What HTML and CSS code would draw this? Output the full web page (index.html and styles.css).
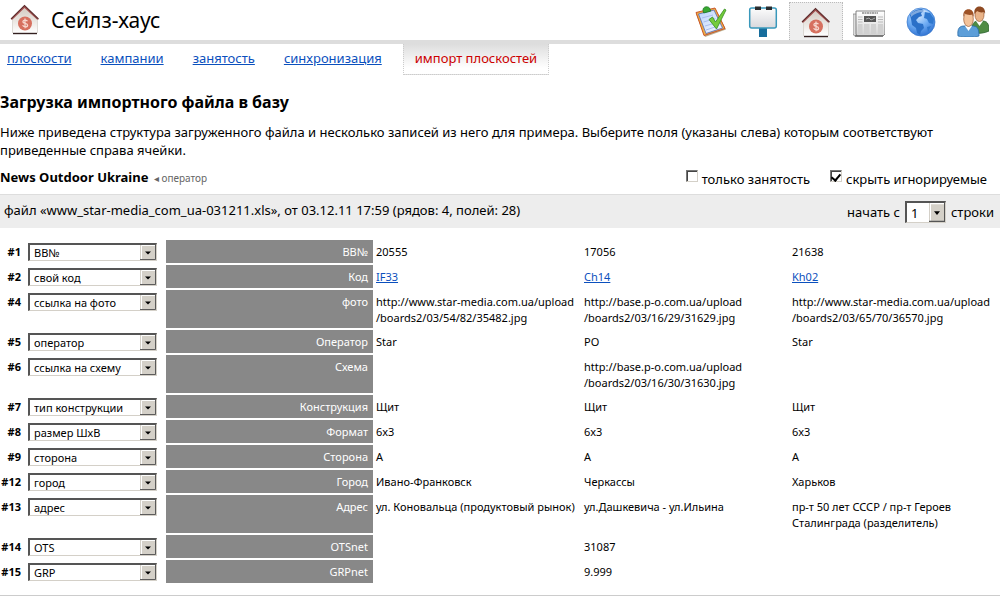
FILE: index.html
```html
<!DOCTYPE html>
<html lang="ru">
<head>
<meta charset="utf-8">
<title>Сейлз-хаус</title>
<link rel="stylesheet" href="styles.css">
</head>
<body>
<svg class="defs" aria-hidden="true">
  <defs>
    <linearGradient id="wall" x1="0" y1="0" x2="0" y2="1"><stop offset="0" stop-color="#d4cbc1"/><stop offset="1" stop-color="#fff"/></linearGradient>
    <linearGradient id="board" x1="0" y1="0" x2="0" y2="1"><stop offset="0" stop-color="#fcfcfc"/><stop offset="1" stop-color="#d8d8dc"/></linearGradient>
    <linearGradient id="sheet" x1="0" y1="0" x2="1" y2="1"><stop offset="0" stop-color="#b9d3fb"/><stop offset="1" stop-color="#f6f8ff"/></linearGradient>
    <linearGradient id="paper" x1="0" y1="0" x2="0" y2="1"><stop offset="0" stop-color="#fff"/><stop offset="1" stop-color="#d2d2d2"/></linearGradient>
    <radialGradient id="sea" cx=".4" cy=".25" r=".8"><stop offset="0" stop-color="#d8eaff"/><stop offset=".5" stop-color="#71aef4"/><stop offset="1" stop-color="#2c6fd0"/></radialGradient>
    <symbol id="house" viewBox="0 0 32 32">
      <path d="M4 15 15.500 4 28 15v14H4z" fill="url(#wall)"/>
      <path d="M4 29.500h24" stroke="#33201f" stroke-width="1.400"/>
      <path d="M3.500 29V15M28.500 29V15" stroke="#d5d0ca" stroke-width=".8"/>
      <path d="M2 15.500 15.500 2 29.500 15.500 28 15.500 15.500 4 3.500 15.500z" fill="#a34a48"/>
      <path d="M2 15 15.500 1.500 29.500 15" fill="none" stroke="#5c2b2b" stroke-width="1.100"/>
      <circle cx="16" cy="19.500" r="7" fill="#d6705f"/>
      <path d="M18.400 17.300c-.6-1.800-4.500-1.700-4.500.4 0 2.300 4.700 1 4.700 3.500 0 2.200-4.300 2.200-4.900 0M16 14.600v9.700" fill="none" stroke="#f7d8cf" stroke-width="1.300"/>
    </symbol>
  </defs>
</svg>

<header class="top">
  <div class="brand">
    <svg class="icon" aria-hidden="true"><use href="#house"/></svg>
    <h1 class="brand-name">Сейлз-хаус</h1>
  </div>
  <nav class="apps" aria-label="Разделы">
    <a class="app" href="#tasks" aria-label="Задачи">
      <svg class="icon" viewBox="0 0 32 32">
        <path d="M1 9 21 4.500l10 20L10 32z" fill="#7c5a18" opacity=".5"/>
        <path d="M1 7.500 20 3l10 20.500L9 30.500z" fill="#f0ae42" stroke="#c9572a" stroke-width="1"/>
        <path d="M3.500 9 19 5l8.500 18L11 28.500z" fill="url(#sheet)" stroke="#4f68bd" stroke-width=".8"/>
        <path d="m7 13 11-3M8.500 17l12-3.500M10 21l12-3.500M11 25l12-4" stroke="#a9bcec" stroke-width="1"/>
        <path d="M8 5.500C7.500 1 14 .5 15 4l.7 2.200-7 1.800z" fill="#38a832" stroke="#17731b" stroke-width=".7"/>
        <path d="m14 14.500 3.500-2.500 3 5L29.500 4l1.500 1-9.500 19z" fill="#75cb3c" stroke="#348c21" stroke-width=".8"/>
      </svg>
    </a>
    <a class="app" href="#boards" aria-label="Щиты">
      <svg class="icon" viewBox="0 0 32 32">
        <path d="M12 21h8v12h-8z" fill="#176d9c"/>
        <rect x="2.700" y="3" width="26.600" height="20" rx="2" fill="url(#board)" stroke="#3998bb" stroke-width="1.500"/>
        <path d="M8 1.500h6V5H8zM19 1.500h6V5h-6z" fill="#292b2d"/>
      </svg>
    </a>
    <a class="app app-active" href="#sales" aria-label="Сейлз-хаус" aria-current="page">
      <svg class="icon" aria-hidden="true"><use href="#house"/></svg>
    </a>
    <a class="app" href="#news" aria-label="Новости">
      <svg class="icon" viewBox="0 0 32 32">
        <path d="M0 9h4v22H1.500L0 29z" fill="#ddd" stroke="#888" stroke-width=".8"/>
        <path d="M3 6h29v23l-2 2H4l-1-2z" fill="url(#paper)" stroke="#777" stroke-width=".9"/>
        <path d="M2 31h28" stroke="#555" stroke-width="1.200"/>
        <path d="M9 8h16" stroke="#555" stroke-width="1.200" stroke-dasharray="2 .5"/>
        <path d="M11 11h12v6H11z" fill="#555"/>
        <path d="m13 14 3-1 2 2 4-2" fill="none" stroke="#aaa"/>
        <path d="M5 12h4.500M5 14.500h4.500M5 17h4.500M25 12h5M25 14.500h5M25 17h5" stroke="#b9b9b9" stroke-width="1.200"/>
        <path d="M5 19h4.500v10H5zM11 19h5.500v10H11zM18 19h5v10h-5zM25 19h5v10h-5z" fill="#d0d0d0"/>
      </svg>
    </a>
    <a class="app" href="#map" aria-label="Карта">
      <svg class="icon" viewBox="0 0 32 32">
        <circle cx="16" cy="17" r="14" fill="url(#sea)" stroke="#3a79cc" stroke-width=".7"/>
        <path d="M5 10C8 5.500 13 3.500 17 4l2 2-3 2 1 3-3 1-3 3 2 3 5 1 1 4-3 3-1 4-3-2-1-5-4-3-1-6z" fill="#2b70c8"/>
        <path d="m20 7 5 1 4 6-1 5-4-1-2-4-3-1zM22 22l4-1-3 6z" fill="#2f78cf"/>
        <path d="M6 9c5-5 14-6 19-1-7-2-14-1-19 4z" fill="#fff" opacity=".4"/>
      </svg>
    </a>
    <a class="app" href="#users" aria-label="Пользователи">
      <svg class="icon" viewBox="0 0 32 32">
        <path d="M15 28c-1-9 2-12 6-12h4c5 0 7 2 7 10-4 2-10 3-17 2z" fill="#4f8b44" stroke="#2c6230" stroke-width=".8"/>
        <path d="m19 16 3.500 5 3.500-5z" fill="#fff"/>
        <ellipse cx="22.500" cy="10" rx="4.500" ry="6.500" fill="#e9b388" stroke="#9e5a30" stroke-width=".7"/>
        <path d="M17.500 9c-2-10 12-10 10.500 0l-1-2c-3 1-5 0-7-1z" fill="#8f4a22"/>
        <path d="M1 31c-1-8 2-10 6-10h8c5 0 7 2 7 10-5 1.500-15 1.500-21 0z" fill="#5c9ed9" stroke="#286ba7" stroke-width=".8"/>
        <path d="m8 21 3.500 5 3.500-5z" fill="#fff"/>
        <ellipse cx="11.500" cy="14" rx="4.800" ry="7.500" fill="#f3c39b" stroke="#9e5a30" stroke-width=".7"/>
        <path d="M6.500 12C4.500 1.500 18.500 1.500 16.500 12l-1-2.500c-3 1-6 0-8-1z" fill="#9d5226"/>
      </svg>
    </a>
  </nav>
</header>

<nav class="tabs" aria-label="Подразделы">
  <a class="tab" href="#planes">плоскости</a>
  <a class="tab" href="#campaigns">кампании</a>
  <a class="tab" href="#busy">занятость</a>
  <a class="tab" href="#sync">синхронизация</a>
  <a class="tab tab-active" href="#import" aria-current="page">импорт плоскостей</a>
</nav>

<main class="content">
  <h2 class="title">Загрузка импортного файла в базу</h2>
  <p class="intro">Ниже приведена структура загруженного файла и несколько записей из него для примера. Выберите поля (указаны слева) которым соответствуют приведенные справа ячейки.</p>

  <div class="operator-row">
    <div class="operator"><strong>News Outdoor Ukraine</strong> <span class="hint">◂ оператор</span></div>
    <div class="flags">
      <label class="flag"><input class="check" type="checkbox">только занятость</label>
      <label class="flag"><input class="check" type="checkbox" checked>скрыть игнорируемые</label>
    </div>
  </div>

  <div class="file-bar">
    <span>файл «www_star-media_com_ua-031211.xls», от 03.12.11 17:59 (рядов: 4, полей: 28)</span>
    <span class="start"><label for="start">начать с</label><select class="pick pick-row" id="start"><option>1</option></select>строки</span>
  </div>

  <table class="map">
    <colgroup><col class="col-num"><col class="col-pick"><col><col><col><col></colgroup>
    <tbody>
      <tr><th><label for="f1">#1</label></th><td><select class="pick" id="f1"><option>BB№</option></select></td><td class="name">BB№</td><td>20555</td><td>17056</td><td>21638</td></tr>
      <tr><th><label for="f2">#2</label></th><td><select class="pick" id="f2"><option>свой код</option></select></td><td class="name">Код</td><td><a href="#IF33">IF33</a></td><td><a href="#Ch14">Ch14</a></td><td><a href="#Kh02">Kh02</a></td></tr>
      <tr><th><label for="f4">#4</label></th><td><select class="pick" id="f4"><option>ссылка на фото</option></select></td><td class="name">фото</td><td>http://www.star-media.com.ua/upload<br>/boards2/03/54/82/35482.jpg</td><td>http://base.p-o.com.ua/upload<br>/boards2/03/16/29/31629.jpg</td><td>http://www.star-media.com.ua/upload<br>/boards2/03/65/70/36570.jpg</td></tr>
      <tr><th><label for="f5">#5</label></th><td><select class="pick" id="f5"><option>оператор</option></select></td><td class="name">Оператор</td><td>Star</td><td>PO</td><td>Star</td></tr>
      <tr><th><label for="f6">#6</label></th><td><select class="pick" id="f6"><option>ссылка на схему</option></select></td><td class="name">Схема</td><td></td><td>http://base.p-o.com.ua/upload<br>/boards2/03/16/30/31630.jpg</td><td></td></tr>
      <tr><th><label for="f7">#7</label></th><td><select class="pick" id="f7"><option>тип конструкции</option></select></td><td class="name">Конструкция</td><td>Щит</td><td>Щит</td><td>Щит</td></tr>
      <tr><th><label for="f8">#8</label></th><td><select class="pick" id="f8"><option>размер ШхВ</option></select></td><td class="name">Формат</td><td>6x3</td><td>6x3</td><td>6x3</td></tr>
      <tr><th><label for="f9">#9</label></th><td><select class="pick" id="f9"><option>сторона</option></select></td><td class="name">Сторона</td><td>А</td><td>А</td><td>А</td></tr>
      <tr><th><label for="f12">#12</label></th><td><select class="pick" id="f12"><option>город</option></select></td><td class="name">Город</td><td>Ивано-Франковск</td><td>Черкассы</td><td>Харьков</td></tr>
      <tr><th><label for="f13">#13</label></th><td><select class="pick" id="f13"><option>адрес</option></select></td><td class="name">Адрес</td><td>ул. Коновальца (продуктовый рынок)</td><td>ул.Дашкевича - ул.Ильина</td><td>пр-т 50 лет СССР / пр-т Героев<br>Сталинграда (разделитель)</td></tr>
      <tr><th><label for="f14">#14</label></th><td><select class="pick" id="f14"><option>OTS</option></select></td><td class="name">OTSnet</td><td></td><td>31087</td><td></td></tr>
      <tr><th><label for="f15">#15</label></th><td><select class="pick" id="f15"><option>GRP</option></select></td><td class="name">GRPnet</td><td></td><td>9.999</td><td></td></tr>
    </tbody>
  </table>
</main>
</body>
</html>
```
FILE: styles.css
```css
* { box-sizing: border-box; }
body { margin: 0; background: #fff; color: #000; font: 13px/18px "Noto Sans", sans-serif; }
a { color: #0b50bd; }
.defs { display: block; width: 0; height: 0; }
.icon { display: block; width: 32px; height: 32px; }

.top { display: flex; justify-content: space-between; align-items: flex-end; height: 44px; border-bottom: 4px solid #ddd; }
.brand { display: flex; align-items: center; gap: 10px; height: 40px; padding-left: 9px; }
.brand-name { margin: 0; font-size: 21px; line-height: 28px; font-weight: 400; }
.apps { display: flex; padding-right: 1px; }
.app { display: flex; justify-content: center; align-items: center; width: 52px; height: 38px; }
.app-active { width: 54px; background: #eee; border: 1px dotted #bbb; border-bottom: 0; padding-top: 3px; }

.tabs { display: flex; align-items: flex-start; gap: 29px; padding-left: 7px; }
.tab { padding-top: 5px; }
.tab-active { margin-left: -8px; padding: 5px 11px 7px; border: 1px dotted #ccc; border-top: 0; background: linear-gradient(#ddd, #fff 80%); color: #c00; text-decoration: none; }

.content { padding-bottom: 10px; border-bottom: 1px solid #ccc; }
.title { margin: 16px 0 0; font-size: 16px; line-height: 22px; }
.intro { margin: 10px 0 0; padding-right: 24px; }

.operator-row { display: flex; justify-content: space-between; padding: 9px 13px 7px 0; }
.hint { margin-left: 2px; color: #666; font-size: 10px; }
.flags { display: flex; gap: 20px; padding-top: 2px; margin-bottom: -2px; }
.flag { display: flex; align-items: flex-start; gap: 4px; }
.check { appearance: none; display: grid; place-content: center; width: 12px; height: 12px; margin: 0; border: 1px solid; border-color: #777 #d4d0c8 #d4d0c8 #777; box-shadow: inset 1px 1px #444; background: #fff; }
.check:checked::before { content: ""; width: 4px; height: 7px; border: solid #000; border-width: 0 2px 2px 0; transform: rotate(40deg); }

.file-bar { display: flex; justify-content: space-between; align-items: flex-start; height: 34px; padding: 6px 6px 0 4px; border-top: 1px solid #ddd; background: #ededed; }
.start { display: flex; align-items: center; gap: 5px; }

.pick {
  appearance: none; display: block; width: 129px; height: 18px; margin: 0; padding: 0 20px 0 4px;
  border: 2px solid; border-color: #555 #d4d0c8 #d4d0c8 #555; border-width: 2px 1px 1px 2px; border-radius: 0; color: #000; font: 11px/14px "Noto Sans", sans-serif;
  background: #fff url("data:image/svg+xml,%3Csvg xmlns='http://www.w3.org/2000/svg' width='16' height='16'%3E%3Cpath fill='%23d4d0c8' d='M0 0h16v16H0z'/%3E%3Cpath fill='none' stroke='%23fff' d='M1.500 15V.5H15'/%3E%3Cpath fill='none' stroke='%23555' d='M15.500 0v15.500H0'/%3E%3Cpath d='M5 7h6l-3 3z'/%3E%3C/svg%3E") right center / 16px 100% no-repeat;
}
.pick-row { width: 41px; height: 22px; font-size: 13px; line-height: 18px; }

.map { width: calc(100% - 2px); margin-top: 12px; table-layout: fixed; border-collapse: separate; border-spacing: 0; font-size: 11px; line-height: 16px; }
.map th, .map td { height: 25px; padding: 4px 0 2px 2px; border-bottom: 2px solid #fff; text-align: left; vertical-align: top; }
.map th { padding: 4px 0 2px; text-align: right; font-weight: 700; }
.map .name { padding-right: 5px; background: #888; color: #fff; text-align: right; border-right: 1px solid #fff; }
.map td:nth-child(2) { padding: 3px 0 0 7px; }
.col-num { width: 21px; }
.col-pick { width: 145px; }
```
